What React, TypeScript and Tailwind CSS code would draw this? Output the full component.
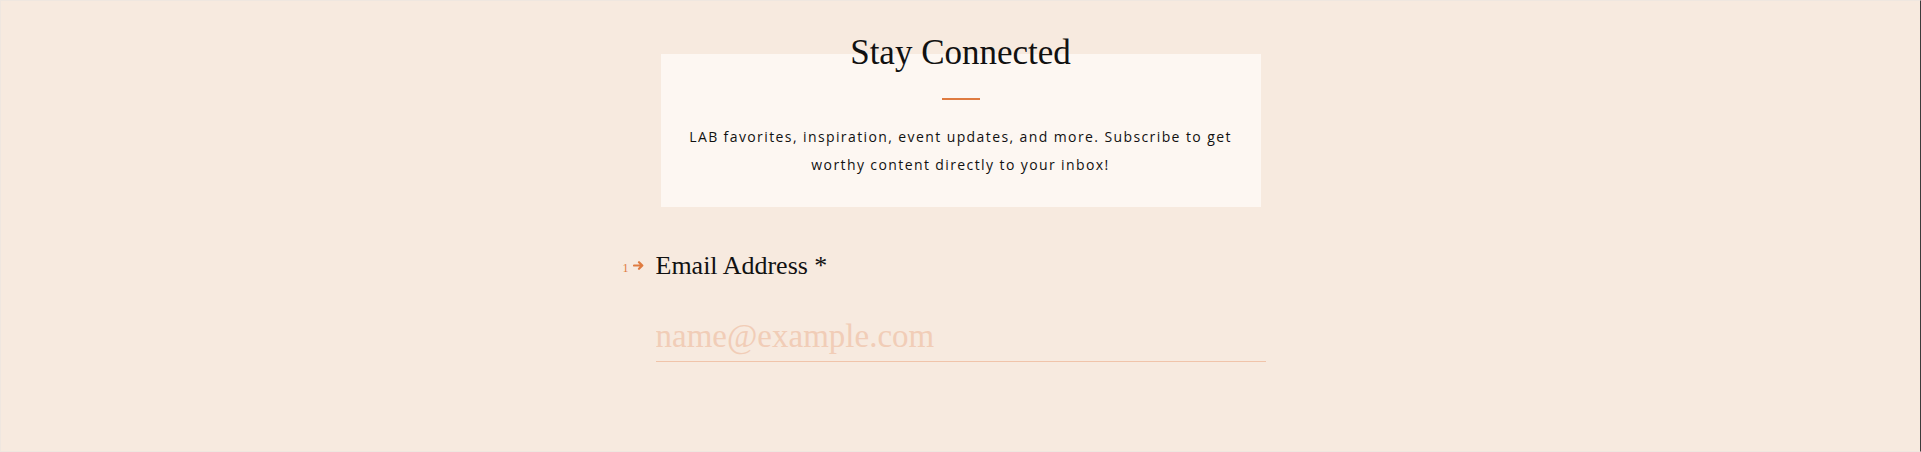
import React from "react";

export default function App() {
  return (
    <div className="w-[1921px] h-[452px] bg-[#f7eadf] border-t border-l border-b border-t-[#efe7e0] border-l-[#efe7e0] border-b-[#efe7e0] border-r border-r-[#3c3c3c] overflow-hidden">
      <div className="flex flex-col items-center pt-[53px]">
        <div className="w-[600px] h-[153px] bg-[#fdf7f2] flex flex-col items-center">
          <h2
            className="mt-[-21px] h-[40px] leading-[40px] text-[35px] text-[#111] font-normal"
            style={{ fontFamily: '"Liberation Serif", "Times New Roman", serif' }}
          >
            Stay Connected
          </h2>
          <div className="mt-[25px] w-[38px] h-[2px] bg-[#df7b40]" />
          <p
            className="mt-[23px] text-center text-[14px] leading-[28px] tracking-[1.4px] text-[#111] whitespace-nowrap"
            style={{ fontFamily: '"Open Sans", "Noto Sans", sans-serif' }}
          >
            LAB favorites, inspiration, event updates, and more. Subscribe to get
            <br />
            worthy content directly to your inbox!
          </p>
        </div>

        <div className="w-[610px] mt-[43px]">
          <div className="flex items-start">
            <div className="-ml-[34px] w-[34px] h-[32px] flex items-start pt-[11px] pl-[1px]">
              <span
                className="text-[12px] leading-[14px] text-[#df7b40]"
                style={{ fontFamily: '"Liberation Serif", serif' }}
              >
                1
              </span>
              <svg
                width="11"
                height="9"
                viewBox="0 0 11 9"
                className="ml-[4px] mt-[0px]"
                fill="none"
                stroke="#df7b40"
                strokeWidth="2.2"
                strokeLinecap="round"
                strokeLinejoin="round"
              >
                <path d="M1 4.5h8M6 1.2l3.3 3.3L6 7.8" />
              </svg>
            </div>
            <label
              className="text-[26px] leading-[32px] text-[#111]"
              style={{ fontFamily: '"Liberation Serif", "Times New Roman", serif' }}
            >
              Email Address *
            </label>
          </div>
          <input
            type="email"
            placeholder="name@example.com"
            className="mt-[34px] block w-full h-[46px] pt-0 pb-[5px] bg-transparent border-0 border-b border-b-[#f0c4aa] outline-none text-[33px] leading-[40px] text-[#111] placeholder:text-[#f1cdb7]"
            style={{ fontFamily: '"Liberation Serif", "Times New Roman", serif' }}
          />
        </div>
      </div>
    </div>
  );
}
